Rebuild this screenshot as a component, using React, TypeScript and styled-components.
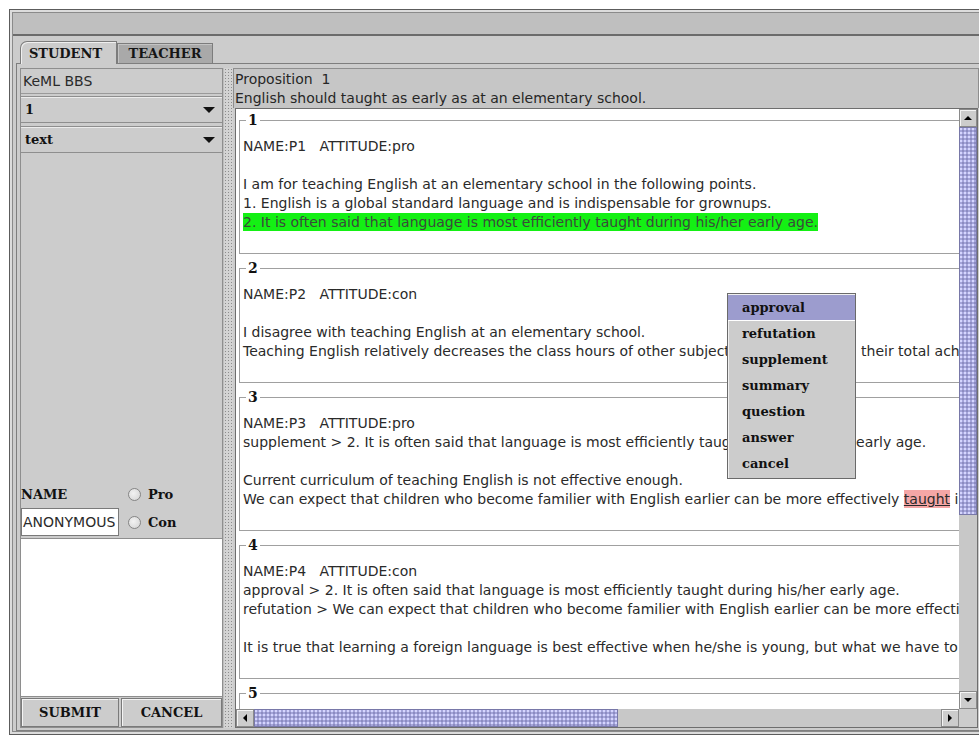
import React from 'react';
import styled, { createGlobalStyle } from 'styled-components';

const sans = `'DejaVu Sans', 'Liberation Sans', sans-serif`;
const serif = `'DejaVu Serif', 'Liberation Serif', serif`;

const GlobalStyle = createGlobalStyle`
  html, body {
    margin: 0;
    padding: 0;
    background: #ffffff;
    overflow: hidden;
  }
  body {
    font-family: ${sans};
  }
`;

// outer window frame
const Frame = styled.div`
  width: 981px;
  height: 726px;
  margin: 9px 0 0 9px;
  box-sizing: border-box;
  border: 1px solid #5c5c5c;
  padding: 2px;
  background: #dcdcdc;
`;

const Inner = styled.div`
  height: 100%;
  box-sizing: border-box;
  border: 1px solid #8a8a8a;
  background: #cccccc;
  display: flex;
  flex-direction: column;
`;

const MenuBar = styled.div`
  height: 21px;
  flex-shrink: 0;
  background: #bfbfbf;
  border-bottom: 2px solid #6b6b6b;
`;

const TabArea = styled.div`
  flex: 1;
  min-height: 0;
  display: flex;
  flex-direction: column;
  padding-top: 5px;
`;

const TabStrip = styled.div`
  position: relative;
  z-index: 1;
  display: flex;
  align-items: flex-end;
  height: 22px;
  padding-left: 7px;
`;

const Tab = styled.div<{ $active?: boolean }>`
  box-sizing: border-box;
  width: ${p => (p.$active ? 97 : 96)}px;
  height: ${p => (p.$active ? 23 : 20)}px;
  margin-bottom: ${p => (p.$active ? -1 : 0)}px;
  padding-right: ${p => (p.$active ? 6 : 0)}px;
  display: flex;
  align-items: center;
  justify-content: center;
  background: ${p => (p.$active ? '#cccccc' : '#a9a9a9')};
  border: 1px solid #7c7c7c;
  border-bottom: none;
  border-top-left-radius: ${p => (p.$active ? 7 : 0)}px;
  box-shadow: ${p => (p.$active ? 'inset 1px 1px #efefef' : 'inset 1px 1px #c4c4c4')};
  font: bold 13px ${serif};
  color: #151515;
`;

const TabBody = styled.div`
  flex: 1;
  min-height: 0;
  display: flex;
  margin: 0 3px;
  padding: 4px 3px 2px;
  border: 1px solid #7e7e7e;
`;

// left column: board selector and reply form
const LeftPanel = styled.div`
  width: 203px;
  flex-shrink: 0;
  box-sizing: border-box;
  border: 1px solid #8e8e8e;
  display: flex;
  flex-direction: column;
`;

const TitleBox = styled.div`
  height: 24px;
  flex-shrink: 0;
  padding-left: 2px;
  border-bottom: 1px solid #9a9a9a;
  font: 14px/24px ${sans};
  color: #2a2a2a;
`;

const Combo = styled.div<{ $gap: number }>`
  height: 25px;
  flex-shrink: 0;
  margin-top: ${p => p.$gap}px;
  display: flex;
  align-items: center;
  justify-content: space-between;
  padding: 0 7px 0 4px;
  border-top: 1px solid #8e8e8e;
  border-bottom: 1px solid #8e8e8e;
  box-shadow: inset 0 1px #ececec;
  font: bold 13px ${serif};
  color: #111;
`;

const ComboArrow = styled.span`
  width: 0;
  height: 0;
  border-left: 6px solid transparent;
  border-right: 6px solid transparent;
  border-top: 6px solid #111;
`;

const Spacer = styled.div`
  flex: 1;
`;

const FormRow = styled.div<{ $height: number }>`
  height: ${p => p.$height}px;
  flex-shrink: 0;
  display: grid;
  grid-template-columns: 104px 1fr;
  align-items: center;
  margin-bottom: 2px;
`;

const FieldLabel = styled.span`
  font: bold 13px ${serif};
  color: #111;
`;

const Choice = styled.label`
  display: flex;
  align-items: center;
  gap: 7px;
  padding-left: 3px;
  font: bold 13px ${serif};
  color: #111;
`;

const Radio = styled.span`
  width: 13px;
  height: 13px;
  box-sizing: border-box;
  border-radius: 50%;
  border: 1px solid #858585;
  background: radial-gradient(circle at 40% 40%, #f2f2f2, #d2d2d2);
`;

const TextField = styled.div`
  width: 98px;
  height: 28px;
  box-sizing: border-box;
  border: 1px solid #7a7a7a;
  background: #ffffff;
  padding-left: 1px;
  overflow: hidden;
  white-space: nowrap;
  font: 14px/26px ${sans};
  color: #2a2a2a;
`;

const TextArea = styled.div`
  height: 159px;
  flex-shrink: 0;
  box-sizing: border-box;
  background: #ffffff;
  border-top: 1px solid #8e8e8e;
  border-bottom: 1px solid #8e8e8e;
`;

const ButtonRow = styled.div`
  height: 29px;
  flex-shrink: 0;
  margin-top: 1px;
  display: grid;
  grid-template-columns: 98px 1fr;
  gap: 2px;
`;

const Button = styled.div`
  display: flex;
  align-items: center;
  justify-content: center;
  box-sizing: border-box;
  border: 1px solid #7a7a7a;
  box-shadow: inset 1px 1px #f4f4f4;
  background: #cccccc;
  font: bold 13px ${serif};
  color: #111;
`;

const Splitter = styled.div`
  width: 10px;
  flex-shrink: 0;
  box-sizing: border-box;
  border-left: 1px solid #bdbdbd;
  background-color: #d3d3d3;
  background-image: radial-gradient(circle, #8c8c8c 0.6px, transparent 1px);
  background-size: 3px 3px;
`;

// right column: proposition and the posts
const RightPanel = styled.div`
  flex: 1;
  min-width: 0;
  display: flex;
  flex-direction: column;
`;

const Proposition = styled.div`
  flex-shrink: 0;
  border: 1px solid #8e8e8e;
  border-bottom: none;
  padding: 1px 0 0 1px;
  background: #c6c6c6;
  font: 14px/19px ${sans};
  color: #262626;
  white-space: pre;
`;

const ScrollPane = styled.div`
  flex: 1;
  min-height: 0;
  margin: 0 1px 0 2px;
  border: 1px solid #6e6e6e;
  display: grid;
  grid-template-columns: minmax(0, 1fr) 18px;
  grid-template-rows: minmax(0, 1fr) 18px;
`;

const Viewport = styled.div`
  position: relative;
  overflow: hidden;
  background: #ffffff;
  padding: 4px 0 0 3px;
`;

const Post = styled.fieldset`
  width: 1360px;
  min-width: 0;
  box-sizing: border-box;
  margin: 0 0 7px;
  padding: 10px 0 2px 3px;
  border: 1px solid #a0a0a0;
`;

const PostNo = styled.legend`
  margin-left: 3px;
  padding: 0 2px;
  font: bold 14px/14px ${serif};
  color: #111;
`;

const Line = styled.div`
  height: 19px;
  white-space: pre;
  font: 14px/19px ${sans};
  color: #2a2a2a;
`;

const Mark = styled.span<{ $tone: 'green' | 'pink' }>`
  padding: 1px 0;
  background: ${p => (p.$tone === 'green' ? '#14f014' : '#f5a6a6')};
  color: ${p => (p.$tone === 'green' ? '#3a4a3a' : '#2a2a2a')};
  text-decoration: ${p => (p.$tone === 'pink' ? 'underline' : 'none')};
`;

const Popup = styled.div`
  position: absolute;
  left: 491px;
  top: 184px;
  width: 129px;
  box-sizing: border-box;
  padding: 1px 0;
  border: 1px solid #6a6a6a;
  background: #cccccc;
  box-shadow: inset 1px 1px #f0f0f0;
`;

const PopupItem = styled.div<{ $active?: boolean }>`
  height: 26px;
  padding-left: 14px;
  background: ${p => (p.$active ? '#9c9cce' : 'transparent')};
  box-shadow: ${p => (p.$active ? 'inset 0 -1px #ffffff' : 'none')};
  font: bold 13px/26px ${serif};
  color: #111;
`;

const VScroll = styled.div`
  display: flex;
  flex-direction: column;
  background: #c8c8c8;
`;

const HScroll = styled.div`
  display: flex;
  background: #c8c8c8;
`;

const Corner = styled.div`
  background: #cccccc;
`;

const Track = styled.div`
  flex: 1;
`;

const arrows = {
  up: 'border-left: 4px solid transparent; border-right: 4px solid transparent; border-bottom: 4px solid #000;',
  down: 'border-left: 4px solid transparent; border-right: 4px solid transparent; border-top: 4px solid #000;',
  left: 'border-top: 4px solid transparent; border-bottom: 4px solid transparent; border-right: 4px solid #000;',
  right: 'border-top: 4px solid transparent; border-bottom: 4px solid transparent; border-left: 4px solid #000;',
};

const ScrollButton = styled.div<{ $dir: keyof typeof arrows }>`
  flex: 0 0 18px;
  box-sizing: border-box;
  display: flex;
  align-items: center;
  justify-content: center;
  background: #cccccc;
  border: 1px solid #8a8a8a;
  box-shadow: inset 1px 1px #f4f4f4;

  &::after {
    content: '';
    width: 0;
    height: 0;
    ${p => arrows[p.$dir]}
  }
`;

// lavender thumb with the small bump texture
const Thumb = styled.div<{ $size: number }>`
  flex: 0 0 ${p => p.$size}px;
  box-sizing: border-box;
  border: 1px solid #7878a8;
  background-color: #a4a4da;
  background-image:
    radial-gradient(circle at 1px 1px, #d6d6ff 0.7px, transparent 1.1px),
    radial-gradient(circle at 3px 3px, #8282b8 0.6px, transparent 1px);
  background-size: 4px 4px;
`;

type PostData = { no: number; lines: React.ReactNode[] };

const posts: PostData[] = [
  {
    no: 1,
    lines: [
      'NAME:P1   ATTITUDE:pro',
      '',
      'I am for teaching English at an elementary school in the following points.',
      '1. English is a global standard language and is indispensable for grownups.',
      <Mark $tone="green">2. It is often said that language is most efficiently taught during his/her early age.</Mark>,
      '',
    ],
  },
  {
    no: 2,
    lines: [
      'NAME:P2   ATTITUDE:con',
      '',
      'I disagree with teaching English at an elementary school.',
      'Teaching English relatively decreases the class hours of other subjects, that may lower  their total achievement.',
      '',
    ],
  },
  {
    no: 3,
    lines: [
      'NAME:P3   ATTITUDE:pro',
      'supplement > 2. It is often said that language is most efficiently taught during his/her  early age.',
      '',
      'Current curriculum of teaching English is not effective enough.',
      <>
        We can expect that children who become familier with English earlier can be more effectively{' '}
        <Mark $tone="pink">taught</Mark> in an elementary school.
      </>,
      '',
    ],
  },
  {
    no: 4,
    lines: [
      'NAME:P4   ATTITUDE:con',
      'approval > 2. It is often said that language is most efficiently taught during his/her early age.',
      'refutation > We can expect that children who become familier with English earlier can be more effectively taught.',
      '',
      'It is true that learning a foreign language is best effective when he/she is young, but what we have to consider is the cost.',
      '',
    ],
  },
  {
    no: 5,
    lines: ['NAME:P5   ATTITUDE:pro', ''],
  },
];

const menuItems = ['approval', 'refutation', 'supplement', 'summary', 'question', 'answer', 'cancel'];

const App = () => (
  <>
    <GlobalStyle />
    <Frame>
      <Inner>
        <MenuBar />
        <TabArea>
          <TabStrip>
            <Tab $active>STUDENT</Tab>
            <Tab>TEACHER</Tab>
          </TabStrip>
          <TabBody>
            <LeftPanel>
              <TitleBox>KeML BBS</TitleBox>
              <Combo $gap={2}>
                1
                <ComboArrow />
              </Combo>
              <Combo $gap={3}>
                text
                <ComboArrow />
              </Combo>
              <Spacer />
              <FormRow $height={24}>
                <FieldLabel>NAME</FieldLabel>
                <Choice>
                  <Radio />
                  Pro
                </Choice>
              </FormRow>
              <FormRow $height={28}>
                <TextField>ANONYMOUS</TextField>
                <Choice>
                  <Radio />
                  Con
                </Choice>
              </FormRow>
              <TextArea />
              <ButtonRow>
                <Button>SUBMIT</Button>
                <Button>CANCEL</Button>
              </ButtonRow>
            </LeftPanel>
            <Splitter />
            <RightPanel>
              <Proposition>
                <div>Proposition  1</div>
                <div>English should taught as early as at an elementary school.</div>
              </Proposition>
              <ScrollPane>
                <Viewport>
                  {posts.map(post => (
                    <Post key={post.no}>
                      <PostNo>{post.no}</PostNo>
                      {post.lines.map((line, i) => (
                        <Line key={i}>{line}</Line>
                      ))}
                    </Post>
                  ))}
                  <Popup>
                    {menuItems.map((item, i) => (
                      <PopupItem key={item} $active={i === 0}>
                        {item}
                      </PopupItem>
                    ))}
                  </Popup>
                </Viewport>
                <VScroll>
                  <ScrollButton $dir="up" />
                  <Thumb $size={388} />
                  <Track />
                  <ScrollButton $dir="down" />
                </VScroll>
                <HScroll>
                  <ScrollButton $dir="left" />
                  <Thumb $size={364} />
                  <Track />
                  <ScrollButton $dir="right" />
                </HScroll>
                <Corner />
              </ScrollPane>
            </RightPanel>
          </TabBody>
        </TabArea>
      </Inner>
    </Frame>
  </>
);

export default App;
